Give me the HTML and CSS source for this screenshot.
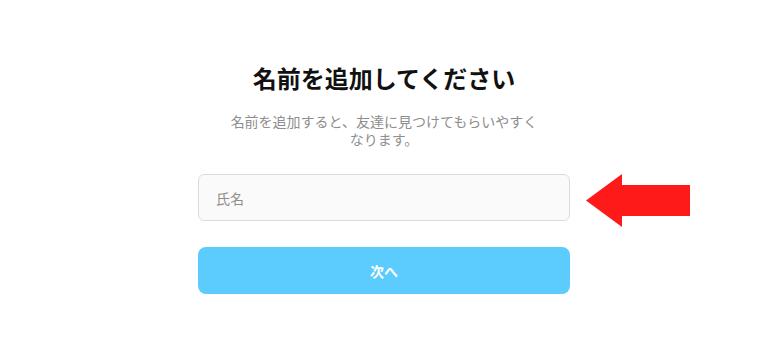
FILE: index.html
```html
<!DOCTYPE html>
<html lang="ja">
<head>
<meta charset="utf-8">
<link rel="stylesheet" href="styles.css">
</head>
<body>
<main class="page">
  <section class="card">
    <h1 class="title">名前を追加してください</h1>
    <p class="subtitle">名前を追加すると、友達に見つけてもらいやすくなります。</p>
    <div class="field-wrap">
      <input class="field" type="text" placeholder="氏名">
      <svg class="arrow" width="104" height="53" viewBox="0 0 104 53"><polygon points="0,26.5 36,0 36,11 104,11 104,42 36,42 36,53" fill="#ff1a1a"/></svg>
    </div>
    <button class="next">次へ</button>
  </section>
</main>
</body>
</html>
```
FILE: styles.css
```css
* { box-sizing: border-box; }
html, body { margin: 0; padding: 0; background: #fff; }
body {
  font-family: "Noto Sans CJK JP", "Noto Sans", sans-serif;
  width: 768px;
  height: 363px;
  overflow: hidden;
}
.page {
  display: flex;
  justify-content: center;
  padding-top: 63px;
}
.card {
  width: 372px;
  display: flex;
  flex-direction: column;
  align-items: center;
}
.title {
  margin: 0;
  font-size: 24px;
  line-height: 30px;
  font-weight: 700;
  color: #111;
}
.subtitle {
  margin: 19px 0 0;
  width: 316px;
  text-align: center;
  font-size: 14px;
  line-height: 18px;
  color: #8e8e8e;
}
.field-wrap {
  position: relative;
  width: 100%;
  margin-top: 26px;
}
.field {
  display: block;
  width: 100%;
  height: 47px;
  padding: 0 17px;
  border: 1px solid #dbdbdb;
  border-radius: 6px;
  background: #fafafa;
  font-family: inherit;
  font-size: 14px;
  color: #262626;
  outline: none;
}
.field::placeholder { color: #8e8e8e; }
.arrow {
  position: absolute;
  left: 388px;
  top: 0;
}
.next {
  margin-top: 26px;
  width: 100%;
  height: 47px;
  border: none;
  border-radius: 8px;
  background: #5ccbfd;
  color: #fff;
  font-family: inherit;
  font-size: 14px;
  font-weight: 700;
}
```
